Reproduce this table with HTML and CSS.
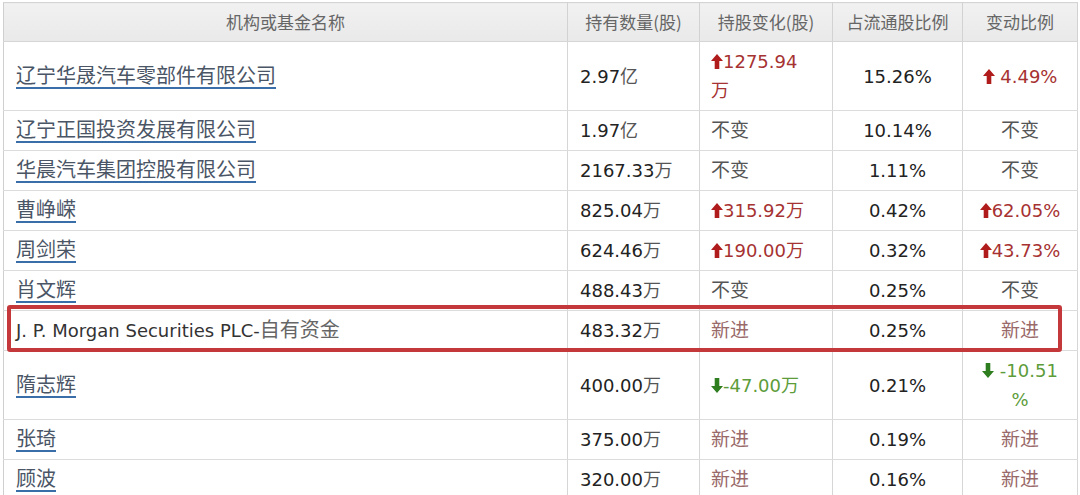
FILE: index.html
```html
<!DOCTYPE html>
<html lang="zh">
<head>
<meta charset="utf-8">
<title>机构持股</title>
<link rel="stylesheet" href="styles.css">
</head>
<body>
<svg width="0" height="0" class="defs">
  <defs>
    <symbol id="up" viewBox="0 0 12 15"><polygon points="6,0 12,7 8.3,7 8.3,15 3.7,15 3.7,7 0,7"/></symbol>
    <symbol id="down" viewBox="0 0 12 15"><polygon points="6,15 12,8 8.3,8 8.3,0 3.7,0 3.7,8 0,8"/></symbol>
  </defs>
</svg>
<div class="wrap">
<table class="holders">
  <colgroup>
    <col class="c-name"><col class="c-qty"><col class="c-chg"><col class="c-pct"><col class="c-rate">
  </colgroup>
  <thead>
    <tr>
      <th>机构或基金名称</th>
      <th>持有数量(股)</th>
      <th>持股变化(股)</th>
      <th>占流通股比例</th>
      <th>变动比例</th>
    </tr>
  </thead>
  <tbody>
    <tr>
      <td class="name"><a href="#">辽宁华晟汽车零部件有限公司</a></td>
      <td class="qty">2.97<span class="u">亿</span></td>
      <td class="chg up"><svg class="ar"><use href="#up"/></svg>1275.94<span class="u">万</span></td>
      <td class="pct">15.26%</td>
      <td class="rate up"><svg class="ar"><use href="#up"/></svg> 4.49%</td>
    </tr>
    <tr>
      <td class="name"><a href="#">辽宁正国投资发展有限公司</a></td>
      <td class="qty">1.97<span class="u">亿</span></td>
      <td class="chg same"><span class="w">不变</span></td>
      <td class="pct">10.14%</td>
      <td class="rate same"><span class="w">不变</span></td>
    </tr>
    <tr>
      <td class="name"><a href="#">华晨汽车集团控股有限公司</a></td>
      <td class="qty">2167.33<span class="u">万</span></td>
      <td class="chg same"><span class="w">不变</span></td>
      <td class="pct">1.11%</td>
      <td class="rate same"><span class="w">不变</span></td>
    </tr>
    <tr>
      <td class="name"><a href="#">曹峥嵘</a></td>
      <td class="qty">825.04<span class="u">万</span></td>
      <td class="chg up"><svg class="ar"><use href="#up"/></svg>315.92<span class="u">万</span></td>
      <td class="pct">0.42%</td>
      <td class="rate up"><svg class="ar"><use href="#up"/></svg>62.05%</td>
    </tr>
    <tr>
      <td class="name"><a href="#">周剑荣</a></td>
      <td class="qty">624.46<span class="u">万</span></td>
      <td class="chg up"><svg class="ar"><use href="#up"/></svg>190.00<span class="u">万</span></td>
      <td class="pct">0.32%</td>
      <td class="rate up"><svg class="ar"><use href="#up"/></svg>43.73%</td>
    </tr>
    <tr>
      <td class="name"><a href="#">肖文辉</a></td>
      <td class="qty">488.43<span class="u">万</span></td>
      <td class="chg same"><span class="w">不变</span></td>
      <td class="pct">0.25%</td>
      <td class="rate same"><span class="w">不变</span></td>
    </tr>
    <tr>
      <td class="name plain">J. P. Morgan Securities PLC-<span class="cn">自有资金</span></td>
      <td class="qty">483.32<span class="u">万</span></td>
      <td class="chg new"><span class="w">新进</span></td>
      <td class="pct">0.25%</td>
      <td class="rate new"><span class="w">新进</span></td>
    </tr>
    <tr>
      <td class="name"><a href="#">隋志辉</a></td>
      <td class="qty">400.00<span class="u">万</span></td>
      <td class="chg down"><svg class="ar"><use href="#down"/></svg>-47.00<span class="u">万</span></td>
      <td class="pct">0.21%</td>
      <td class="rate down"><svg class="ar"><use href="#down"/></svg> -10.51 %</td>
    </tr>
    <tr>
      <td class="name"><a href="#">张琦</a></td>
      <td class="qty">375.00<span class="u">万</span></td>
      <td class="chg new"><span class="w">新进</span></td>
      <td class="pct">0.19%</td>
      <td class="rate new"><span class="w">新进</span></td>
    </tr>
    <tr>
      <td class="name"><a href="#">顾波</a></td>
      <td class="qty">320.00<span class="u">万</span></td>
      <td class="chg new"><span class="w">新进</span></td>
      <td class="pct">0.16%</td>
      <td class="rate new"><span class="w">新进</span></td>
    </tr>
  </tbody>
</table>
<div class="highlight"></div>
</div>
</body>
</html>
```

FILE: styles.css
```css
html, body {
  margin: 0;
  padding: 0;
  background: #ffffff;
}
body {
  width: 1080px;
  height: 495px;
  overflow: hidden;
  font-family: "DejaVu Sans", "Noto Sans CJK SC", sans-serif;
  color: #2b2b2b;
}
.defs {
  position: absolute;
  width: 0;
  height: 0;
}
.wrap {
  position: relative;
  padding: 2px 0 0 3px;
}
.holders {
  table-layout: fixed;
  border-collapse: collapse;
  width: 1074px;
  border-top: 1px solid #d4d4d4;
  border-left: 1px solid #cfcfcf;
  border-right: 1px solid #cfcfcf;
}
.c-name { width: 564px; }
.c-qty { width: 132px; }
.c-chg { width: 133px; }
.c-pct { width: 130px; }
.c-rate { width: 115px; }

.holders th {
  background: linear-gradient(#f1f1f1, #e9e9e9);
  font-family: "Noto Sans CJK SC", sans-serif;
  font-weight: normal;
  font-size: 17px;
  color: #666;
  line-height: 30px;
  height: 38px;
  box-sizing: border-box;
  padding: 4px 4px;
  text-align: center;
  border-right: 1px solid #d2d2d2;
  border-bottom: 1px solid #d6d6d6;
  white-space: nowrap;
}
.holders td {
  font-size: 18px;
  line-height: 29px;
  padding: 5px 12px;
  border-right: 1px solid #d6d6d6;
  border-bottom: 1px solid #dcdcdc;
  vertical-align: middle;
  text-align: left;
}
.holders td a,
.holders td .u,
.holders td .cn,
.holders td .w {
  line-height: 18px;
}
.holders td.name a {
  font-family: "Noto Sans CJK SC", sans-serif;
  font-size: 20px;
  color: #4a5566;
  text-decoration: underline;
  text-decoration-color: #3a6ea8;
  text-decoration-thickness: 2px;
  text-underline-offset: 4px;
}
.holders td.plain {
  color: #333;
}
.cn {
  font-family: "Noto Sans CJK SC", sans-serif;
  font-size: 20px;
  color: #666;
}
.u {
  font-family: "Noto Sans CJK SC", sans-serif;
  font-size: 18px;
  color: #555;
}
.qty {
  color: #222;
}
.holders td.chg {
  padding-left: 11px;
  padding-right: 20px;
}
.pct {
  color: #222;
}
.holders td.pct,
.holders td.rate {
  text-align: center;
}
.holders td.rate {
  padding-left: 10px;
  padding-right: 10px;
}
.same .w {
  font-family: "Noto Sans CJK SC", sans-serif;
  font-size: 19px;
  color: #555;
}
.new .w {
  font-family: "Noto Sans CJK SC", sans-serif;
  font-size: 19px;
  color: #9a6a6a;
}
.up {
  color: #a63232;
}
.up .u {
  color: #a63232;
}
.down {
  color: #5d9c3a;
}
.down .u {
  color: #5d9c3a;
}
.ar {
  width: 12px;
  height: 15px;
  vertical-align: -1px;
}
.up .ar {
  fill: #b01c1c;
}
.down .ar {
  fill: #2e7d1f;
}
.highlight {
  position: absolute;
  left: 7px;
  top: 305px;
  width: 1055px;
  height: 47px;
  box-sizing: border-box;
  border: 4px solid #c4383b;
  border-radius: 3px;
  pointer-events: none;
}
```
